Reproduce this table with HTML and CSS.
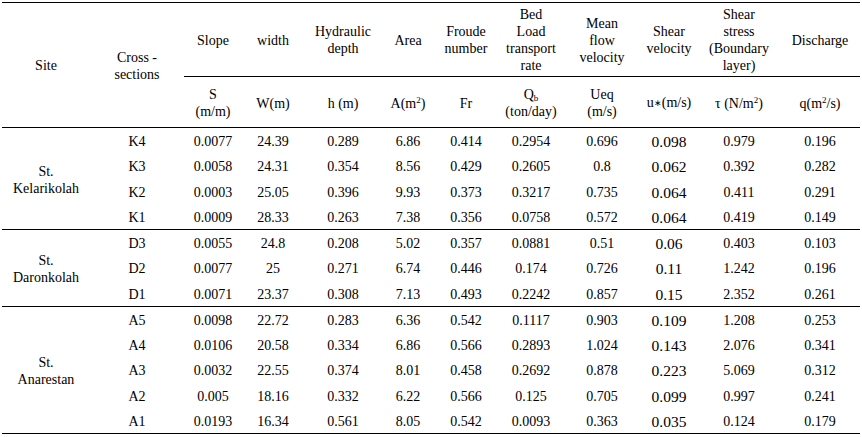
FILE: index.html
```html
<!DOCTYPE html>
<html>
<head>
<meta charset="utf-8">
<link rel="stylesheet" href="styles.css">
</head>
<body>
<table class="data">
  <colgroup>
    <col class="c-site"><col class="c-cross"><col class="c-slope"><col class="c-width"><col class="c-hyd"><col class="c-area"><col class="c-fr"><col class="c-bed"><col class="c-mean"><col class="c-sv"><col class="c-ss"><col class="c-q">
  </colgroup>
  <thead>
    <tr class="h1">
      <th rowspan="2" class="last">Site</th>
      <th rowspan="2" class="last">Cross -<br>sections</th>
      <th class="mid">Slope</th>
      <th class="mid">width</th>
      <th class="mid">Hydraulic<br>depth</th>
      <th class="mid">Area</th>
      <th class="mid">Froude<br>number</th>
      <th class="mid">Bed<br>Load<br>transport<br>rate</th>
      <th class="mid">Mean<br>flow<br>velocity</th>
      <th class="mid">Shear<br>velocity</th>
      <th class="mid">Shear<br>stress<br>(Boundary<br>layer)</th>
      <th class="mid">Discharge</th>
    </tr>
    <tr class="h2">
      <th class="last">S<br>(m/m)</th>
      <th class="last">W(m)</th>
      <th class="last">h (m)</th>
      <th class="last">A(m<sup>2</sup>)</th>
      <th class="last">Fr</th>
      <th class="last">Q<sub>b</sub><br>(ton/day)</th>
      <th class="last">Ueq<br>(m/s)</th>
      <th class="last">u<span class="star">∗</span>(m/s)</th>
      <th class="last">τ (N/m<sup>2</sup>)</th>
      <th class="last">q(m<sup>2</sup>/s)</th>
    </tr>
  </thead>
  <tbody>
    <tr><td rowspan="4" class="last">St.<br>Kelarikolah</td><td>K4</td><td>0.0077</td><td>24.39</td><td>0.289</td><td>6.86</td><td>0.414</td><td>0.2954</td><td>0.696</td><td class="sv">0.098</td><td>0.979</td><td>0.196</td></tr>
    <tr><td>K3</td><td>0.0058</td><td>24.31</td><td>0.354</td><td>8.56</td><td>0.429</td><td>0.2605</td><td>0.8</td><td class="sv">0.062</td><td>0.392</td><td>0.282</td></tr>
    <tr><td>K2</td><td>0.0003</td><td>25.05</td><td>0.396</td><td>9.93</td><td>0.373</td><td>0.3217</td><td>0.735</td><td class="sv">0.064</td><td>0.411</td><td>0.291</td></tr>
    <tr class="end"><td>K1</td><td>0.0009</td><td>28.33</td><td>0.263</td><td>7.38</td><td>0.356</td><td>0.0758</td><td>0.572</td><td class="sv">0.064</td><td>0.419</td><td>0.149</td></tr>
    <tr><td rowspan="3" class="last">St.<br>Daronkolah</td><td>D3</td><td>0.0055</td><td>24.8</td><td>0.208</td><td>5.02</td><td>0.357</td><td>0.0881</td><td>0.51</td><td class="sv">0.06</td><td>0.403</td><td>0.103</td></tr>
    <tr><td>D2</td><td>0.0077</td><td>25</td><td>0.271</td><td>6.74</td><td>0.446</td><td>0.174</td><td>0.726</td><td class="sv">0.11</td><td>1.242</td><td>0.196</td></tr>
    <tr class="end"><td>D1</td><td>0.0071</td><td>23.37</td><td>0.308</td><td>7.13</td><td>0.493</td><td>0.2242</td><td>0.857</td><td class="sv">0.15</td><td>2.352</td><td>0.261</td></tr>
    <tr><td rowspan="5" class="last">St.<br>Anarestan</td><td>A5</td><td>0.0098</td><td>22.72</td><td>0.283</td><td>6.36</td><td>0.542</td><td>0.1117</td><td>0.903</td><td class="sv">0.109</td><td>1.208</td><td>0.253</td></tr>
    <tr><td>A4</td><td>0.0106</td><td>20.58</td><td>0.334</td><td>6.86</td><td>0.566</td><td>0.2893</td><td>1.024</td><td class="sv">0.143</td><td>2.076</td><td>0.341</td></tr>
    <tr><td>A3</td><td>0.0032</td><td>22.55</td><td>0.374</td><td>8.01</td><td>0.458</td><td>0.2692</td><td>0.878</td><td class="sv">0.223</td><td>5.069</td><td>0.312</td></tr>
    <tr><td>A2</td><td>0.005</td><td>18.16</td><td>0.332</td><td>6.22</td><td>0.566</td><td>0.125</td><td>0.705</td><td class="sv">0.099</td><td>0.997</td><td>0.241</td></tr>
    <tr class="end"><td>A1</td><td>0.0193</td><td>16.34</td><td>0.561</td><td>8.05</td><td>0.542</td><td>0.0093</td><td>0.363</td><td class="sv">0.035</td><td>0.124</td><td>0.179</td></tr>
  </tbody>
</table>
</body>
</html>
```

FILE: styles.css
```css
html, body {
  margin: 0;
  padding: 0;
  background: #ffffff;
}

.data {
  margin: 2px 2px 0 2px;
  width: 858px;
  table-layout: fixed;
  border-collapse: collapse;
  font-family: "Liberation Serif", "Times New Roman", serif;
  font-size: 14px;
  line-height: 17px;
  color: #000;
  border-top: 1px solid #000;
}

.c-site { width: 88px; }
.c-cross { width: 94px; }
.c-slope { width: 58px; }
.c-width { width: 62px; }
.c-hyd { width: 78px; }
.c-area { width: 52px; }
.c-fr { width: 64px; }
.c-bed { width: 66px; }
.c-mean { width: 76px; }
.c-sv { width: 58px; }
.c-ss { width: 82px; }
.c-q { width: 80px; }

.data th,
.data td {
  padding: 0;
  text-align: center;
  vertical-align: middle;
  font-weight: normal;
  white-space: nowrap;
}

.h1 { height: 74px; }
.h1 th { padding-top: 1px; }
.h2 { height: 51px; }
.h2 th { padding-top: 2px; }

.data .mid { border-bottom: 1px solid #000; }
.data .last { border-bottom: 1px solid #000; }

.data tbody tr { height: 25.5px; }
.data tbody td { padding-top: 2px; }
.data tbody tr.end td { border-bottom: 1px solid #000; }

.data td.sv { font-size: 15.5px; }

sup, sub {
  font-size: 9px;
  line-height: 0;
}
sup { vertical-align: 5px; }
sub { vertical-align: -2px; }

.star {
  font-size: 9px;
  vertical-align: 1px;
}
```
